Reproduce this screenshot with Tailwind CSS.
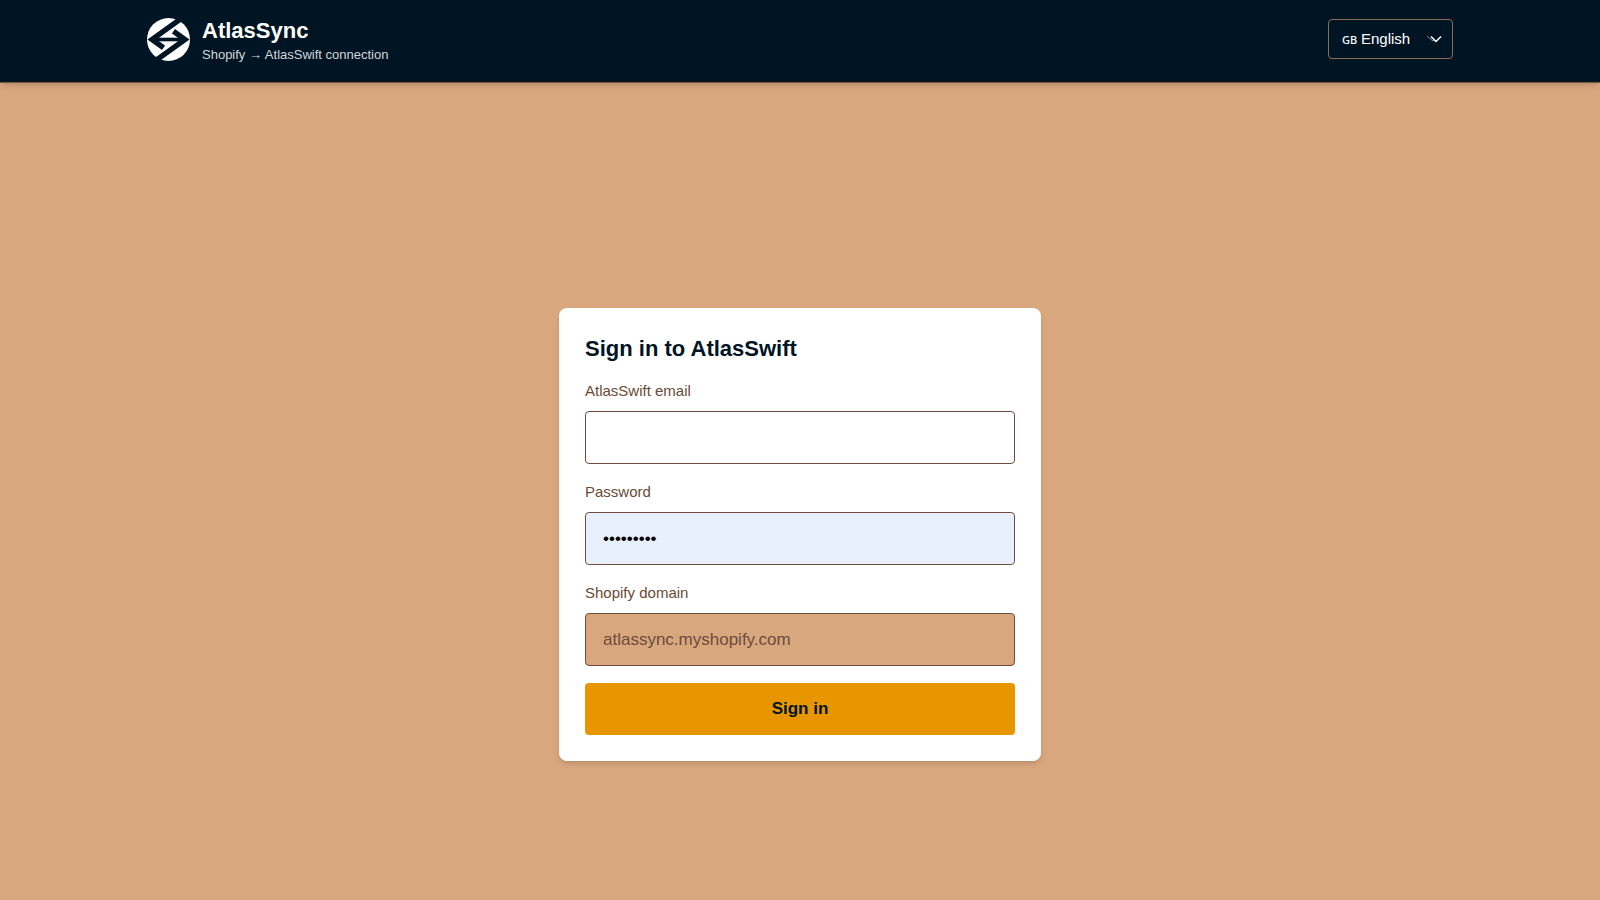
<!DOCTYPE html>
<html lang="en">
<head>
  <meta charset="UTF-8" />
  <meta name="viewport" content="width=device-width, initial-scale=1.0" />
  <title>AtlasSync - Sign in</title>
  <script src="https://cdn.jsdelivr.net/npm/@tailwindcss/browser@4"></script>
</head>
<body class="min-h-screen flex flex-col bg-[#d9a77e] font-['Liberation_Sans',Arial,sans-serif] text-[#001524]">
  <header class="bg-[#001524] border-b border-[#78573f] shadow-md">
    <div class="max-w-[1308px] mx-auto px-px pt-[13px] pb-[17px]">
      <div class="flex items-center justify-between">
        <div class="flex items-center gap-3">
          <svg class="size-[43px]" viewBox="0 0 130 130" aria-hidden="true">
            <circle cx="65" cy="65" r="65" fill="#fff" />
            <g fill="none" stroke="#001524" stroke-width="16">
              <path d="M100 4L15 65L50 90" />
              <path d="M30 126L115 65L80 40" />
              <path d="M22 65H108" stroke-width="11" />
            </g>
          </svg>
          <div class="pt-1">
            <h1 class="text-[22px] leading-7 font-bold text-white">AtlasSync</h1>
            <p class="text-[13px] leading-5 text-[#d1d5db]">Shopify → AtlasSwift connection</p>
          </div>
        </div>
        <div class="relative">
          <select aria-label="Language" class="block appearance-none w-[125px] h-10 pl-8 pr-8 rounded border border-[#8a6d58] bg-transparent text-[15px] text-white">
            <option>English</option>
          </select>
          <span class="absolute left-[14px] top-[13px] text-[11px] leading-4 font-medium text-white font-['Noto_Sans'] pointer-events-none">GB</span>
          <svg class="absolute right-[11px] top-[14px] w-4 h-3 pointer-events-none" viewBox="0 0 16 12" fill="none" stroke="#fff">
            <path d="M1 3L7 8L9 6" stroke-opacity=".5" />
            <path d="M5 3.500L10 8.500L15 3.500" stroke-width="1.500" />
          </svg>
        </div>
      </div>
    </div>
  </header>

  <main class="flex-1 flex items-center justify-center px-4 pt-[106px] pb-5">
    <form class="w-full max-w-[482px] bg-white rounded-lg shadow-md p-[26px]">
      <h2 class="text-[22px] leading-[30px] font-bold mb-[15px]">Sign in to AtlasSwift</h2>

      <div class="mb-4">
        <label for="email" class="block text-[15px] leading-6 text-[#6b4a35] mb-2">AtlasSwift email</label>
        <input type="email" id="email" class="block w-full h-[53px] border border-[#6d4c3d] rounded px-[17px] text-[17px]" />
      </div>

      <div class="mb-4">
        <label for="password" class="block text-[15px] leading-6 text-[#6b4a35] mb-2">Password</label>
        <input type="password" id="password" value="atlas1234" class="block w-full h-[53px] border border-[#6d4c3d] rounded px-[17px] text-[17px] bg-[#e8f0fe] text-black" />
      </div>

      <div class="mb-[17px]">
        <label for="domain" class="block text-[15px] leading-6 text-[#6b4a35] mb-2">Shopify domain</label>
        <input type="text" id="domain" value="atlassync.myshopify.com" readonly class="block w-full h-[53px] border border-[#6d4c3d] rounded px-[17px] text-[17px] bg-[#d9a77e] text-[#6d4c3d]" />
      </div>

      <button type="submit" class="block w-full h-[52px] rounded bg-[#e89600] text-[17px] font-bold">Sign in</button>
    </form>
  </main>
</body>
</html>
